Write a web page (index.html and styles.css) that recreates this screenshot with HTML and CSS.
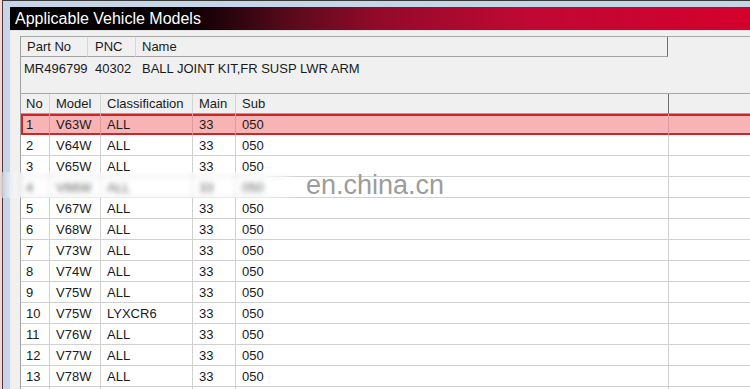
FILE: index.html
```html
<!DOCTYPE html>
<html>

<head>
    <meta charset="utf-8" />
    <meta name="viewport" content="width=device-width, initial-scale=1">
    <title>Applicable Vehicle Models</title>
    <link rel="stylesheet" href="styles.css">
</head>

<body>
    <div class="window">
        <div class="title">Applicable Vehicle Models</div>
        <div class="client">
            <div class="panel parts">
                <table class="grid part-grid">
                    <colgroup>
                        <col style="width: 67px">
                        <col style="width: 48px">
                        <col style="width: 532px">
                    </colgroup>
                    <thead>
                        <tr>
                            <th>Part No</th>
                            <th class="pnc">PNC</th>
                            <th class="last">Name</th>
                        </tr>
                    </thead>
                    <tbody>
                        <tr>
                            <td class="partno">MR496799</td>
                            <td class="pnc">40302</td>
                            <td>BALL JOINT KIT,FR SUSP LWR ARM</td>
                        </tr>
                    </tbody>
                </table>
            </div>
            <div class="panel models">
                <table class="grid model-grid">
                    <colgroup>
                        <col style="width: 29px">
                        <col style="width: 51px">
                        <col style="width: 92px">
                        <col style="width: 43px">
                        <col style="width: 433px">
                        <col style="width: 81px">
                    </colgroup>
                    <thead>
                        <tr>
                            <th>No</th>
                            <th>Model</th>
                            <th>Classification</th>
                            <th>Main</th>
                            <th class="last">Sub</th>
                            <th class="extra"></th>
                        </tr>
                    </thead>
                    <tbody>
                        <tr class="selected"><td>1</td><td>V63W</td><td>ALL</td><td>33</td><td>050</td><td></td></tr>
                        <tr><td>2</td><td>V64W</td><td>ALL</td><td>33</td><td>050</td><td></td></tr>
                        <tr><td>3</td><td>V65W</td><td>ALL</td><td>33</td><td>050</td><td></td></tr>
                        <tr><td>4</td><td>V66W</td><td>ALL</td><td>33</td><td>050</td><td></td></tr>
                        <tr><td>5</td><td>V67W</td><td>ALL</td><td>33</td><td>050</td><td></td></tr>
                        <tr><td>6</td><td>V68W</td><td>ALL</td><td>33</td><td>050</td><td></td></tr>
                        <tr><td>7</td><td>V73W</td><td>ALL</td><td>33</td><td>050</td><td></td></tr>
                        <tr><td>8</td><td>V74W</td><td>ALL</td><td>33</td><td>050</td><td></td></tr>
                        <tr><td>9</td><td>V75W</td><td>ALL</td><td>33</td><td>050</td><td></td></tr>
                        <tr><td>10</td><td>V75W</td><td>LYXCR6</td><td>33</td><td>050</td><td></td></tr>
                        <tr><td>11</td><td>V76W</td><td>ALL</td><td>33</td><td>050</td><td></td></tr>
                        <tr><td>12</td><td>V77W</td><td>ALL</td><td>33</td><td>050</td><td></td></tr>
                        <tr><td>13</td><td>V78W</td><td>ALL</td><td>33</td><td>050</td><td></td></tr>
                        <tr><td></td><td></td><td></td><td></td><td></td><td></td></tr>
                    </tbody>
                </table>
            </div>
        </div>
    </div>
    <!-- watermark smear over row 4 -->
    <div class="smear"></div>
    <div class="watermark">en.china.cn</div>
</body>

</html>
```

FILE: styles.css
```css
* {
    box-sizing: border-box;
}

html,
body {
    font-family: 'Liberation Sans', Arial, sans-serif;
    font-size: 13px;
    color: #1a1a1a;
    width: 750px;
    height: 389px;
    margin: 0px;
    padding: 0px;
    overflow: hidden;
    background: #f0d8d8;
}

.window {
    margin-left: 2px;
    height: 389px;
    border-top: 1px solid #3a3a3a;
    border-left: 1px solid #5a3434;
    padding: 6px 0 0 7px;
    background: #c4d6e8;
    display: flex;
    flex-direction: column;
}

.title {
    height: 23px;
    line-height: 23px;
    padding-left: 5px;
    font-size: 16px;
    color: #fff;
    background: linear-gradient(to right, #000 0%, #0a0004 24%, #5a0a1c 38%, #940a2a 50%, #c00834 70%, #d4002c 100%);
}

.client {
    flex: 1;
    background: #f0f0f0;
    border-top: 1px solid #e2e2e2;
    padding: 5px 0 0 10px;
}

.panel {
    border-top: 1px solid #a8a8a8;
    border-left: 1px solid #a0a0a0;
}

.parts {
    height: 57px;
}

.models {
    background: #fff;
}

.grid {
    font: inherit;
    color: inherit;
    border-collapse: separate;
    border-spacing: 0;
    table-layout: fixed;
}

.part-grid {
    width: 647px;
}

.model-grid {
    width: 729px;
}

.grid th {
    font-weight: normal;
    text-align: left;
    height: 20px;
    line-height: 18px;
    padding: 1px 0 0 6px;
    background: #f0f0f0;
    border-bottom: 1px solid #a0a0a0;
    border-right: 1px solid #d6d6d6;
    white-space: nowrap;
}

.grid th.last {
    border-right: 1px solid #6e6e6e;
}

.grid th.extra {
    border-right: none;
}

.part-grid td {
    height: 23px;
    line-height: 23px;
    padding: 0 0 0 6px;
    white-space: nowrap;
}

.part-grid .pnc {
    padding-left: 7px;
}

.part-grid td.partno {
    padding-left: 3px;
}

.model-grid td {
    height: 21px;
    line-height: 19px;
    padding: 1px 0 0 6px;
    border-bottom: 1px solid #d0d0d0;
    border-right: 1px solid #d0d0d0;
    white-space: nowrap;
}

.model-grid td:first-child,
.model-grid th:first-child {
    padding-left: 5px;
}

.model-grid td:last-child {
    border-right: none;
}

.model-grid tr.selected td {
    background: #f8b4b4;
    border-right-color: #e09a9a;
    border-bottom-color: #c42a2a;
    box-shadow: inset 0 2px 0 #c42a2a, inset 0 -1px 0 #c42a2a;
}

.model-grid tr.selected td:first-child {
    box-shadow: inset 2px 0 0 #c42a2a, inset 0 2px 0 #c42a2a, inset 0 -1px 0 #c42a2a;
}

.smear {
    position: absolute;
    left: 0;
    top: 172px;
    width: 300px;
    height: 26px;
    background: rgba(255, 255, 255, 0.3);
    backdrop-filter: blur(2.5px);
    -webkit-mask-image: linear-gradient(to right, #000 88%, transparent);
}

.watermark {
    position: absolute;
    left: 306px;
    top: 169px;
    font-size: 27px;
    line-height: 32px;
    color: #9c9c9c;
}
```
